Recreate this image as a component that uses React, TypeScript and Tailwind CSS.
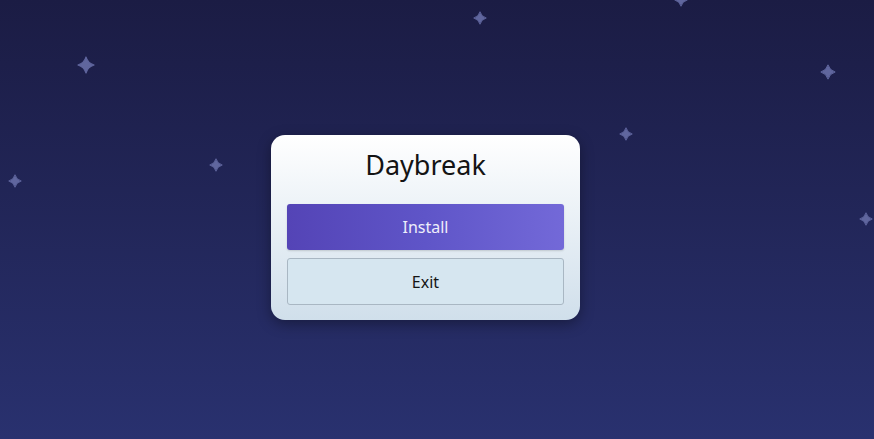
import React from 'react'

const stars = [
  { x: 86, y: 65, s: 18 },
  { x: 480, y: 18, s: 14 },
  { x: 681, y: 0, s: 14 },
  { x: 828, y: 72, s: 16 },
  { x: 626, y: 134, s: 14 },
  { x: 216, y: 165, s: 14 },
  { x: 15, y: 181, s: 14 },
  { x: 866, y: 219, s: 14 },
]

function Star({ x, y, s }: { x: number; y: number; s: number }) {
  return (
    <svg
      className="absolute pointer-events-none blur-[0.7px]"
      style={{ left: x - s / 2, top: y - s / 2, width: s, height: s }}
      viewBox="0 0 20 20"
    >
      <path
        d="M10 1 Q12 8 19 10 Q12 12 10 19 Q8 12 1 10 Q8 8 10 1 Z"
        fill="#60669e"
        stroke="#60669e"
        strokeWidth="1.2"
        strokeLinejoin="round"
      />
    </svg>
  )
}

export default function App() {
  return (
    <div
      className="relative w-full h-[439px] overflow-hidden flex justify-center items-start pr-[23px] pt-[135px] bg-gradient-to-b from-[#1b1c44] to-[#29316f]"
      style={{ fontFamily: '"Noto Sans", Inter, sans-serif' }}
    >
      {stars.map((st, i) => (
        <Star key={i} {...st} />
      ))}
      <div className="relative w-[309px] h-[185px] rounded-[14px] bg-gradient-to-b from-white to-[#d0dfeb] shadow-[0_4px_14px_rgba(0,0,0,0.35)] px-4 pt-[12px] flex flex-col">
        <h1 className="text-[27px] leading-[36px] text-center font-normal text-[#141414]">Daybreak</h1>
        <button className="mt-[21px] h-[46px] w-full rounded-[3px] bg-gradient-to-r from-[#5444b6] via-[#5f55c8] to-[#7369d8] text-[#eeeefa] text-[16px] shadow-[0_1px_2px_rgba(0,0,0,0.15)]">
          Install
        </button>
        <button className="mt-[8px] h-[47px] w-full rounded-[3px] border border-[#a9b7c3] bg-[#d6e6f0] text-[#151515] text-[16px]">
          Exit
        </button>
      </div>
    </div>
  )
}
